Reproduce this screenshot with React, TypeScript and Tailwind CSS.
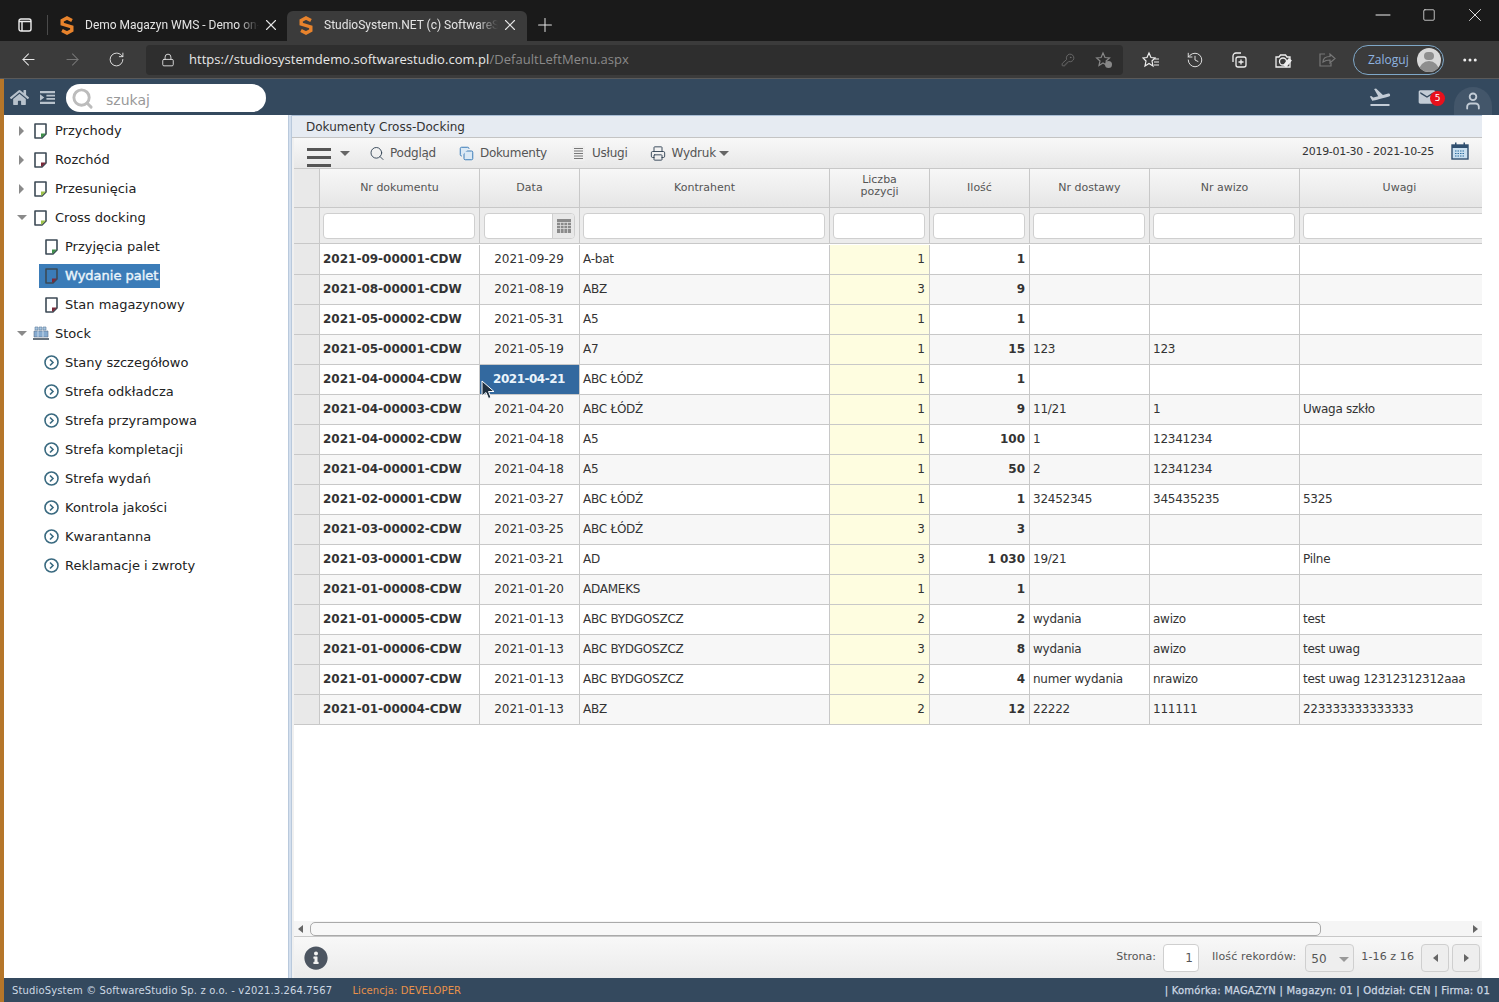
import React from "react"
import {
  ArrowLeft,
  ArrowRight,
  RotateCw,
  Lock,
  KeyRound,
  X,
  Plus,
  Minus,
  Square,
  MoreHorizontal,
  Search,
  History,
  User,
  Printer,
  Copy,
} from "lucide-react"
import { FaHome, FaInfoCircle } from "react-icons/fa"
import { MdFlightTakeoff, MdMail } from "react-icons/md"

const FONT = "[font-family:'DejaVu_Sans',Verdana,sans-serif]"

type Row = {
  nr: string
  data: string
  kontrahent: string
  poz: string
  ilosc: string
  dostawa?: string
  awizo?: string
  uwagi?: string
}

const rows: Row[] = [
  { nr: "2021-09-00001-CDW", data: "2021-09-29", kontrahent: "A-bat", poz: "1", ilosc: "1" },
  { nr: "2021-08-00001-CDW", data: "2021-08-19", kontrahent: "ABZ", poz: "3", ilosc: "9" },
  { nr: "2021-05-00002-CDW", data: "2021-05-31", kontrahent: "A5", poz: "1", ilosc: "1" },
  { nr: "2021-05-00001-CDW", data: "2021-05-19", kontrahent: "A7", poz: "1", ilosc: "15", dostawa: "123", awizo: "123" },
  { nr: "2021-04-00004-CDW", data: "2021-04-21", kontrahent: "ABC ŁÓDŹ", poz: "1", ilosc: "1" },
  { nr: "2021-04-00003-CDW", data: "2021-04-20", kontrahent: "ABC ŁÓDŹ", poz: "1", ilosc: "9", dostawa: "11/21", awizo: "1", uwagi: "Uwaga szkło" },
  { nr: "2021-04-00002-CDW", data: "2021-04-18", kontrahent: "A5", poz: "1", ilosc: "100", dostawa: "1", awizo: "12341234" },
  { nr: "2021-04-00001-CDW", data: "2021-04-18", kontrahent: "A5", poz: "1", ilosc: "50", dostawa: "2", awizo: "12341234" },
  { nr: "2021-02-00001-CDW", data: "2021-03-27", kontrahent: "ABC ŁÓDŹ", poz: "1", ilosc: "1", dostawa: "32452345", awizo: "345435235", uwagi: "5325" },
  { nr: "2021-03-00002-CDW", data: "2021-03-25", kontrahent: "ABC ŁÓDŹ", poz: "3", ilosc: "3" },
  { nr: "2021-03-00001-CDW", data: "2021-03-21", kontrahent: "AD", poz: "3", ilosc: "1 030", dostawa: "19/21", uwagi: "Pilne" },
  { nr: "2021-01-00008-CDW", data: "2021-01-20", kontrahent: "ADAMEKS", poz: "1", ilosc: "1" },
  { nr: "2021-01-00005-CDW", data: "2021-01-13", kontrahent: "ABC BYDGOSZCZ", poz: "2", ilosc: "2", dostawa: "wydania", awizo: "awizo", uwagi: "test" },
  { nr: "2021-01-00006-CDW", data: "2021-01-13", kontrahent: "ABC BYDGOSZCZ", poz: "3", ilosc: "8", dostawa: "wydania", awizo: "awizo", uwagi: "test uwag" },
  { nr: "2021-01-00007-CDW", data: "2021-01-13", kontrahent: "ABC BYDGOSZCZ", poz: "2", ilosc: "4", dostawa: "numer wydania", awizo: "nrawizo", uwagi: "test uwag 12312312312aaa" },
  { nr: "2021-01-00004-CDW", data: "2021-01-13", kontrahent: "ABZ", poz: "2", ilosc: "12", dostawa: "22222", awizo: "111111", uwagi: "223333333333333" },
]

const Logo = () => (
  <svg width="14" height="19" viewBox="0 0 14 19" className="shrink-0">
    <path d="M12 4.500L7 2 2.200 4.500V8L11.800 11V14.500L7 17 2 14.500" fill="none" stroke="#e8832c" strokeWidth="3.4" />
  </svg>
)

const DocIcon = ({ corner, white }: { corner: string; white?: boolean }) => (
  <svg width="15" height="16" viewBox="0 0 15 16" className="shrink-0">
    <path d="M2 1h11v10l-4 4H2z" fill={white ? "#3b7cb8" : "#fff"} stroke="#3c4a55" strokeWidth="1.6" strokeLinejoin="round" />
    <path d="M12.500 10.500v.5l-3.500 3.500h-1v-4z" fill={corner} />
  </svg>
)

const CircleIcon = () => (
  <svg width="15" height="15" viewBox="0 0 15 15" className="shrink-0">
    <circle cx="7.500" cy="7.500" r="6.500" fill="#fff" stroke="#3a6a80" strokeWidth="1.6" />
    <path d="M6 4.500l3 3-3 3" fill="none" stroke="#3a6a80" strokeWidth="1.6" />
  </svg>
)

const StockIcon = () => (
  <svg width="16" height="15" viewBox="0 0 16 15" className="shrink-0">
    <path d="M2 1h3v3H2zM6 1h3v3H6zM10 1h3v3h-3z" fill="#a9c6e0" stroke="#5a7a9a" strokeWidth="0.6" />
    <path d="M1 5h14v6H1z" fill="#86abd0" stroke="#5a708a" strokeWidth="0.6" />
    <path d="M5 5v6M10 5v6" stroke="#dbe6f0" strokeWidth="0.8" />
    <path d="M0 12h16v2H0z" fill="#68727c" />
  </svg>
)

const Expander = ({ open }: { open: boolean }) =>
  open ? (
    <span className="w-0 h-0 border-x-[5px] border-x-transparent border-t-[5px] border-t-[#8a8a8a]" />
  ) : (
    <span className="w-0 h-0 border-y-[5px] border-y-transparent border-l-[5px] border-l-[#8a8a8a]" />
  )

const TreeTop = ({ label, corner, open, stock }: { label: string; corner?: string; open: boolean; stock?: boolean }) => (
  <div className="h-[29px] flex items-center">
    <div className="w-[29px] pl-[6px] flex items-center justify-center shrink-0">
      <Expander open={open} />
    </div>
    <div className="w-[22px] shrink-0 flex">{stock ? <StockIcon /> : <DocIcon corner={corner as string} />}</div>
    <span className="text-[13px] text-[#222]">{label}</span>
  </div>
)

const TreeChild = ({ label, corner, selected }: { label: string; corner?: string; selected?: boolean }) => (
  <div className="h-[29px] flex items-center pl-[35px]">
    <div className={`h-[24px] flex items-center pl-[5px] pr-[2px] ${selected ? "bg-[#3b7cb8]" : ""}`}>
      <div className="w-[21px] shrink-0 flex">{corner ? <DocIcon corner={corner} white={selected} /> : <CircleIcon />}</div>
      <span className={`text-[13px] ${selected ? "text-[#eaf4fb] [-webkit-text-stroke:0.4px_#eaf4fb]" : "text-[#222]"}`}>{label}</span>
    </div>
  </div>
)

const columns = [
  { title: "Nr dokumentu", w: "w-[160px]" },
  { title: "Data", w: "w-[100px]" },
  { title: "Kontrahent", w: "w-[250px]" },
  { title: "Liczba pozycji", w: "w-[100px]" },
  { title: "Ilość", w: "w-[100px]" },
  { title: "Nr dostawy", w: "w-[120px]" },
  { title: "Nr awizo", w: "w-[150px]" },
  { title: "Uwagi", w: "w-[200px]" },
]

const Cell = ({ w, className = "", children }: { w: string; className?: string; children?: React.ReactNode }) => (
  <div className={`${w} shrink-0 h-full border-r border-[#c8c8c8] pl-[3px] pr-[4px] pb-[2px] flex items-center text-[12px] text-[#333] whitespace-nowrap overflow-hidden ${className}`}>
    {children}
  </div>
)

const GridRow = ({ row, odd }: { row: Row; odd: boolean }) => {
  const selected = row.data === "2021-04-21"
  return (
    <div className={`flex h-[30px] border-b border-[#c8c8c8] ${odd ? "bg-[#f7f7f7]" : "bg-white"}`}>
      <div className="w-[26px] shrink-0 bg-[#e9e9e9] border-r border-[#c8c8c8]" />
      <Cell w="w-[160px]" className="font-bold text-[#222]">{row.nr}</Cell>
      <Cell w="w-[100px]" className={`justify-center ${selected ? "bg-[#33699f] text-[#eaf4fb] font-bold tracking-[-0.5px]" : ""}`}>{row.data}</Cell>
      <Cell w="w-[250px]" className="tracking-[-0.25px]">{row.kontrahent}</Cell>
      <Cell w="w-[100px]" className="justify-end bg-[#fefde0]">{row.poz}</Cell>
      <Cell w="w-[100px]" className="justify-end font-bold text-[#222]">{row.ilosc}</Cell>
      <Cell w="w-[120px]" className="tracking-[-0.25px]">{row.dostawa}</Cell>
      <Cell w="w-[150px]" className="tracking-[-0.25px]">{row.awizo}</Cell>
      <Cell w="w-[200px]" className="tracking-[-0.28px]">{row.uwagi}</Cell>
    </div>
  )
}

const ToolBtn = ({ icon, label, caret }: { icon: React.ReactNode; label: string; caret?: boolean }) => (
  <div className="flex items-center gap-[5px] text-[12px] tracking-[-0.25px] text-[#555]">
    <span className="w-[16px] h-[16px] flex items-center justify-center shrink-0">{icon}</span>
    <span>{label}</span>
    {caret && <span className="-ml-[2px] w-0 h-0 border-x-[5px] border-x-transparent border-t-[5px] border-t-[#666]" />}
  </div>
)

const ChromeTab = ({ title, active }: { title: string; active?: boolean }) => (
  <div className={`h-[30px] w-[240px] flex items-center pl-[12px] pb-[2px] rounded-t-[6px] ${active ? "bg-[#3b3b3b]" : ""}`}>
    <Logo />
    <span className="ml-[11px] w-[174px] text-[12px] text-[#e4e4e4] whitespace-nowrap overflow-hidden [font-family:Roboto,sans-serif] [mask-image:linear-gradient(to_right,black_88%,transparent)]">
      {title}
    </span>
    <X size={18} strokeWidth={1.5} className="ml-[3px] text-[#e4e4e4]" />
  </div>
)

export default function App() {
  return (
    <div className={`w-[1499px] h-[1002px] flex flex-col overflow-hidden bg-white ${FONT}`}>
      {/* tabs */}
      <div className="h-[41px] bg-[#1a1a1a] flex items-end pl-[18px] shrink-0">
        <div className="h-[30px] flex items-center pb-[2px]">
          <svg width="14" height="14" viewBox="0 0 14 14" fill="none" stroke="#eee" strokeWidth="1.4">
            <rect x="1" y="1" width="12" height="12" rx="2" />
            <path d="M1 3.500h12M4 3.500V13" />
          </svg>
          <span className="ml-[15px] h-[20px] w-px bg-[#4a4a4a]" />
        </div>
        <ChromeTab title="Demo Magazyn WMS - Demo on-line" />
        <div className="-ml-[1px]"><ChromeTab title="StudioSystem.NET (c) SoftwareStudio" active /></div>
        <div className="h-[30px] flex items-center ml-[7px] pb-[2px]"><Plus size={22} className="text-[#e4e4e4]" strokeWidth={1.1} /></div>
        <div className="ml-auto self-start h-[30px] flex items-center text-[#eee] pr-px">
          <span className="w-[46px] flex justify-center"><Minus size={24} strokeWidth={1} /></span>
          <span className="w-[46px] flex justify-center"><Square size={14} strokeWidth={1.3} /></span>
          <span className="w-[46px] flex justify-center"><X size={22} strokeWidth={1} /></span>
        </div>
      </div>
      {/* address bar */}
      <div className="h-[38px] bg-[#3b3b3b] flex items-center shrink-0 border-b border-[#5a5a5a]">
        <ArrowLeft size={19} strokeWidth={1.3} className="ml-[19px] text-[#e8e8e8]" />
        <ArrowRight size={19} strokeWidth={1.3} className="ml-[25px] text-[#777]" />
        <RotateCw size={17} strokeWidth={1.3} className="ml-[26px] text-[#e8e8e8]" />
        <div className="ml-[21px] w-[977px] h-[30px] bg-[#2e2e2e] rounded-[4px] flex items-center pl-[15px] pr-[10px]">
          <Lock size={14} strokeWidth={1.5} className="text-[#e8e8e8]" />
          <span className="ml-[14px] mt-px text-[13px] tracking-[0.04px] text-[#e8e8e8] whitespace-nowrap [font-family:'Open_Sans',sans-serif]">
            https://studiosystemdemo.softwarestudio.com.pl<span className="text-[#8a8a8a]">/DefaultLeftMenu.aspx</span>
          </span>
          <KeyRound size={14} strokeWidth={1.3} className="ml-auto text-[#777]" />
          <svg width="18" height="18" viewBox="0 0 18 18" className="ml-[20px]" fill="none" stroke="#888" strokeWidth="1.2">
            <path d="M8 2l2 4.500 4.500.5-3.400 3 1 4.500L8 12l-4 2.500 1-4.500-3.400-3 4.500-.5z" />
            <circle cx="13.500" cy="13.500" r="3.500" fill="#888" stroke="none" />
          </svg>
        </div>
        <svg width="18" height="18" viewBox="0 0 18 18" className="ml-[19px]" fill="none" stroke="#eee" strokeWidth="1.2">
          <path d="M7 2l2 4.500 4 .5-3 3 1 5-4-2.500L3 15l1-5-3-3 4-.5zM12 8h5M12 11h5M12 14h5" />
        </svg>
        <History size={18} strokeWidth={1.2} className="ml-[26px] text-[#eee]" />
        <svg width="18" height="18" viewBox="0 0 18 18" className="ml-[26px]" fill="none" stroke="#eee" strokeWidth="1.3">
          <rect x="6" y="6" width="10" height="10" rx="2" />
          <path d="M11 8.500v5M8.500 11h5M3 11V5a3 3 0 0 1 3-3h5" />
        </svg>
        <svg width="18" height="18" viewBox="0 0 18 18" className="ml-[26px]" fill="none" stroke="#eee" strokeWidth="1.3">
          <path d="M2 6h3l1.500-2h5L13 6h3v10H2z" />
          <circle cx="9" cy="10.500" r="3.500" />
          <path d="M10 14l5-6 2 1.500-5 6z" fill="#eee" />
        </svg>
        <svg width="18" height="18" viewBox="0 0 18 18" className="ml-[26px]" fill="none" stroke="#777" strokeWidth="1.2">
          <path d="M7 3H2v12h11v-3" />
          <path d="M5 11c0-4 3-5.500 7-5.500V3l5 4.500-5 4.500V9c-3 0-5 .5-7 2z" />
        </svg>
        <div className="ml-[17px] w-[91px] h-[30px] rounded-full border border-[#7fa8c8] flex items-center pl-[14px] pr-[2px]">
          <span className="text-[12px] text-[#8fb4e0] [font-family:'Open_Sans',sans-serif]">Zaloguj</span>
          <div className="ml-auto w-[24px] h-[24px] rounded-full bg-[#d8d8d8] overflow-hidden flex flex-col items-center pt-[4px]">
            <div className="w-[10px] h-[10px] rounded-full bg-[#8e8e8e]" />
            <div className="mt-[1px] w-[20px] h-[12px] rounded-t-full bg-[#8e8e8e]" />
          </div>
        </div>
        <MoreHorizontal size={18} className="ml-[17px] text-[#eee]" />
      </div>
      {/* app header */}
      <div className="h-[36px] bg-[#34495e] border-l-[4px] border-[#b5762a] flex items-center shrink-0 pl-[6px]">
        <FaHome size={19} className="text-[#b8c2cc]" />
        <svg width="15" height="15" viewBox="0 0 14 14" className="ml-[11px]" fill="#b8c2cc">
          <path d="M0 1h14v2H0zM6 4.500h8V6H6zM6 7.500h8V9H6zM0 11h14v2H0zM0 4l4 3-4 3z" />
        </svg>
        <div className="ml-[11px] mt-[2px] w-[200px] h-[28px] bg-white rounded-full flex items-center pl-[5px]">
          <Search size={23} strokeWidth={3} className="text-[#bcbcbc]" />
          <span className="ml-[12px] text-[14px] text-[#999] mt-[4px]">szukaj</span>
        </div>
        <div className="ml-auto flex items-center text-[#c3ccd6]">
          <MdFlightTakeoff size={24} />
          <div className="relative ml-[25px]">
            <MdMail size={20} />
            <span className="absolute left-[13px] top-[4px] w-[15px] h-[15px] rounded-full bg-[#e8101c] text-white text-[9px] flex items-center justify-center">5</span>
          </div>
          <div className="ml-[17px] mr-[7px] w-[38px] h-[28px] mt-[8px] rounded-t-full bg-[#43566a] flex items-center justify-center">
            <User size={20} strokeWidth={2.2} />
          </div>
        </div>
      </div>
      {/* body */}
      <div className="flex-1 min-h-0 flex border-l-[4px] border-[#b5762a]">
        <aside className="w-[284px] shrink-0 pt-px bg-white">
          <TreeTop label="Przychody" corner="#3f8f4a" open={false} />
          <TreeTop label="Rozchód" corner="#7a2a3a" open={false} />
          <TreeTop label="Przesunięcia" corner="#9ec24a" open={false} />
          <TreeTop label="Cross docking" corner="#9ec24a" open />
          <TreeChild label="Przyjęcia palet" corner="#3f8f4a" />
          <TreeChild label="Wydanie palet" corner="#7a2a3a" selected />
          <TreeChild label="Stan magazynowy" corner="#7a2a3a" />
          <TreeTop label="Stock" open stock />
          <TreeChild label="Stany szczegółowo" />
          <TreeChild label="Strefa odkładcza" />
          <TreeChild label="Strefa przyrampowa" />
          <TreeChild label="Strefa kompletacji" />
          <TreeChild label="Strefa wydań" />
          <TreeChild label="Kontrola jakości" />
          <TreeChild label="Kwarantanna" />
          <TreeChild label="Reklamacje i zwroty" />
        </aside>
        <div className="w-[4px] shrink-0 bg-[#d3dfee] border-x border-[#b9c9dc]" />
        <main className="w-[1190px] shrink-0 flex flex-col min-w-0 pl-[2px] bg-[#f0f0f0]">
          <div className="h-[23px] -ml-[2px] pl-[14px] bg-[#e6ebf2] border-b border-[#c4c4c4] border-t border-t-[#a9bdd4] flex items-center text-[12px] text-[#333] shrink-0">
            Dokumenty Cross-Docking
          </div>
          <div className="h-[30px] bg-gradient-to-b from-[#f8f8f8] to-[#e8e8e8] flex items-center shrink-0 pl-[13px] pr-[13px] text-[#555]">
            <div className="flex flex-col gap-[5px] mt-[8px] relative z-10">
              <span className="block w-[24px] h-[3px] bg-[#555]" />
              <span className="block w-[24px] h-[3px] bg-[#555]" />
              <span className="block w-[24px] h-[3px] bg-[#555]" />
            </div>
            <span className="ml-[9px] w-0 h-0 border-x-[5px] border-x-transparent border-t-[5px] border-t-[#666]" />
            <div className="ml-[19px]"><ToolBtn icon={<Search size={17} strokeWidth={1.4} className="text-[#345]" />} label="Podgląd" /></div>
            <div className="ml-[23px]"><ToolBtn icon={<Copy size={15} strokeWidth={1.6} fill="#dbe9f5" className="text-[#3b7cb8]" />} label="Dokumenty" /></div>
            <div className="ml-[24px]">
              <ToolBtn
                icon={
                  <svg width="13" height="15" viewBox="0 0 13 15" stroke="#777" strokeWidth="1">
                    <rect x="0" y="0" width="13" height="15" fill="#efefef" stroke="none" />
                    <path d="M2 2.500h9M2 5h9M2 7.500h9M2 10h9M2 12.500h9" />
                  </svg>
                }
                label="Usługi"
              />
            </div>
            <div className="ml-[23px]"><ToolBtn icon={<Printer size={17} strokeWidth={1.4} className="text-[#345]" />} label="Wydruk" caret /></div>
            <span className="ml-auto text-[11px] tracking-[-0.3px] text-[#333] mb-[1px]">2019-01-30 - 2021-10-25</span>
            <svg width="18" height="18" viewBox="0 0 18 18" className="ml-[17px] mb-[4px]">
              <rect x="1" y="3" width="16" height="14" fill="#c9dff0" stroke="#2f4f6f" strokeWidth="1.4" />
              <path d="M1 3h16v3H1zM4 0.500h1.500V4H4zM12.500 0.500H14V4h-1.500z" fill="#2f4f6f" />
              <path d="M4 9h10M4 11.500h10M4 14h10" stroke="#2f6f9f" strokeWidth="1.2" strokeDasharray="1.500 1" />
            </svg>
          </div>
          {/* grid */}
          <div className="flex-1 min-h-0 bg-white overflow-hidden">
            <div className="w-[1240px]">
              <div className="flex h-[40px] bg-gradient-to-b from-[#f7f7f7] to-[#e6e6e6] border-y border-[#c8c8c8]">
                <div className="w-[26px] shrink-0 bg-[#e9e9e9] border-r border-[#c8c8c8]" />
                {columns.map((c) => (
                  <div key={c.title} className={`${c.w} shrink-0 h-full border-r border-[#c8c8c8] flex items-center justify-center text-center text-[11px] text-[#555] ${c.title === "Liczba pozycji" ? "px-[25px] pb-[4px] leading-[12px]" : ""}`}>
                    {c.title}
                  </div>
                ))}
              </div>
              <div className="flex h-[36px] bg-[#ececec] border-b border-[#c8c8c8]">
                <div className="w-[26px] shrink-0 bg-[#e9e9e9] border-r border-[#c8c8c8]" />
                {columns.map((c) => (
                  <div key={c.title} className={`${c.w} shrink-0 h-full border-r border-[#c8c8c8] flex items-center pl-[3px] pr-[4px]`}>
                    {c.title === "Data" ? (
                      <div className="w-full ml-px h-[26px] flex bg-white border border-[#cfcfcf] rounded-[4px] overflow-hidden">
                        <div className="flex-1" />
                        <div className="w-[22px] bg-[#e8e8e8] border-l border-[#cfcfcf] flex items-center justify-center">
                          <svg width="14" height="14" viewBox="0 0 14 14">
                            <rect width="14" height="14" fill="#8a8a8a" />
                            <path d="M0 3.500h14M0 6.500h14M0 9.500h14M3.500 3v11M7 3v11M10.500 3v11" stroke="#ddd" strokeWidth="0.8" />
                          </svg>
                        </div>
                      </div>
                    ) : (
                      <div className="w-full h-[26px] bg-white border border-[#cfcfcf] rounded-[4px]" />
                    )}
                  </div>
                ))}
              </div>
              <div className="flex h-px bg-white">
                <div className="w-[26px] shrink-0 bg-[#e9e9e9] border-r border-[#c8c8c8]" />
              </div>
              {rows.map((r, i) => (
                <GridRow key={r.nr} row={r} odd={i % 2 === 1} />
              ))}
            </div>
          </div>
          {/* scrollbar */}
          <div className="h-[16px] bg-[#f5f5f5] border-b border-[#c8c8c8] flex items-center shrink-0 pl-[4px] pr-[4px]">
            <span className="w-0 h-0 border-y-[4px] border-y-transparent border-r-[5px] border-r-[#666]" />
            <div className="ml-[7px] w-[1011px] h-[14px] rounded-[5px] border border-[#aaa] bg-[#f8f8f8]" />
            <span className="ml-auto w-0 h-0 border-y-[4px] border-y-transparent border-l-[5px] border-l-[#666]" />
          </div>
          {/* footer */}
          <div className="h-[41px] bg-gradient-to-b from-[#f8f8f8] to-[#ebebeb] flex items-center shrink-0 pl-[10px] pr-[2px] text-[11px] text-[#555]">
            <FaInfoCircle size={24} className="text-[#4c5561]" />
            <span className="ml-auto">Strona:</span>
            <div className="ml-[7px] w-[36px] h-[28px] bg-white border border-[#cfcfcf] rounded-[4px] flex items-center justify-end pr-[5px] text-[12px]">1</div>
            <span className="ml-[13px] tracking-[0.15px]">Ilość rekordów:</span>
            <div className="ml-[9px] w-[49px] h-[28px] bg-[#eee] border border-[#cfcfcf] rounded-[4px] flex items-center justify-between pl-[5px] pr-[4px] text-[12px] pt-[3px]">
              50
              <span className="w-0 h-0 border-x-[5px] border-x-transparent border-t-[5px] border-t-[#999]" />
            </div>
            <span className="ml-[7px] tracking-[0.1px]">1-16 z 16</span>
            <div className="ml-[7px] w-[28px] h-[28px] bg-[#eee] border border-[#cfcfcf] rounded-[4px] flex items-center justify-center">
              <span className="w-0 h-0 border-y-[4px] border-y-transparent border-r-[5px] border-r-[#666]" />
            </div>
            <div className="ml-[3px] w-[28px] h-[28px] bg-[#eee] border border-[#cfcfcf] rounded-[4px] flex items-center justify-center">
              <span className="w-0 h-0 border-y-[4px] border-y-transparent border-l-[5px] border-l-[#666]" />
            </div>
          </div>
        </main>
      </div>
      {/* status */}
      <div className="h-[24px] bg-[#34495e] border-l-[4px] border-[#b5762a] flex items-center shrink-0 pl-[8px] pr-[9px] text-[10px] text-[#cdd8e3] whitespace-nowrap">
        <span className="tracking-[0.14px]">StudioSystem © SoftwareStudio Sp. z o.o. - v2021.3.264.7567</span>
        <span className="ml-[20px] text-[#e8914a] tracking-[0.1px]">Licencja: DEVELOPER</span>
        <span className="ml-auto tracking-[0.22px] [-webkit-text-stroke:0.25px_#cdd8e3]">| Komórka: MAGAZYN | Magazyn: 01 | Oddział: CEN | Firma: 01</span>
      </div>
      {/* cursor */}
      <svg width="14" height="20" viewBox="0 0 14 20" className="absolute left-[481px] top-[380px]">
        <path d="M1 1v15l4-3.500 2.500 6 2.500-1-2.500-6H13z" fill="#1f2f3f" stroke="#fff" strokeWidth="1" />
      </svg>
    </div>
  )
}
